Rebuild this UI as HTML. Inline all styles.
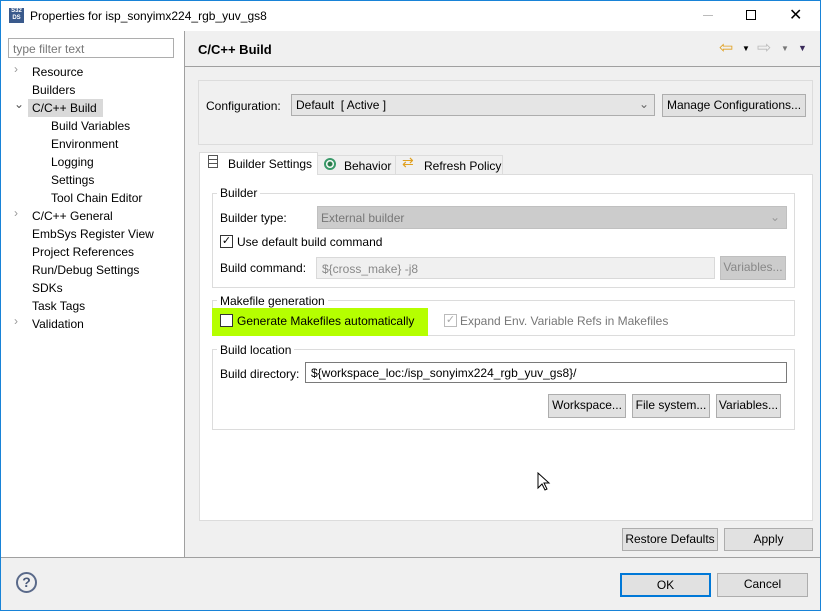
<!DOCTYPE html>
<html><head><meta charset="utf-8"><style>
*{box-sizing:border-box;margin:0;padding:0}
body{width:821px;height:611px;overflow:hidden;font-family:"Liberation Sans",sans-serif;font-size:12px;color:#000;background:#f0f0f0;position:relative}
.a{position:absolute;white-space:nowrap}
.btn{position:absolute;background:#e1e1e1;border:1px solid #adadad;text-align:center;line-height:20px}
.grp{position:absolute;border:1px solid #dcdcdc}
.gl{position:absolute;background:#fff;padding:0 3px;top:-8px;left:5px}
.cb{position:absolute;width:13px;height:13px;border:1px solid #333;background:#fff}
</style></head><body>
<div class="a" style="left:0;top:0;width:821px;height:611px;border:1px solid #1883d7;z-index:10;pointer-events:none"></div>
<div class="a" style="left:0;top:0;width:821px;height:31px;background:#fff"></div>
<div class="a" style="left:9px;top:8px;width:15px;height:15px;background:#3a5a8c;color:#fff;font-size:6px;line-height:7px;text-align:center;font-weight:bold">S32<br>DS</div>
<div class="a" style="left:30px;top:9px;font-size:12px">Properties for isp_sonyimx224_rgb_yuv_gs8</div>
<div class="a" style="left:703px;top:15px;width:10px;height:1px;background:#bbb"></div>
<div class="a" style="left:746px;top:10px;width:10px;height:10px;border:1px solid #000"></div>
<div class="a" style="left:789px;top:5px;font-size:16px">✕</div>
<!-- left -->
<div class="a" style="left:1px;top:31px;width:183px;height:526px;background:#fff"></div>
<div class="a" style="left:184px;top:31px;width:1px;height:526px;background:#a0a0a0"></div>
<div class="a" style="left:8px;top:38px;width:166px;height:20px;border:1px solid #adadad;background:#fff;color:#777;padding:3px 4px">type filter text</div>
<div class="a" style="left:28px;top:99px;width:75px;height:18px;background:#d9d9d9"></div>
<div class="a" style="left:14px;top:62px;color:#999">›</div>
<div class="a" style="left:14px;top:97px;color:#555">⌄</div>
<div class="a" style="left:14px;top:206px;color:#999">›</div>
<div class="a" style="left:14px;top:314px;color:#999">›</div>
<div class="a" style="left:32px;top:63px;line-height:18px">Resource<br>Builders<br>C/C++ Build</div>
<div class="a" style="left:51px;top:117px;line-height:18px">Build Variables<br>Environment<br>Logging<br>Settings<br>Tool Chain Editor</div>
<div class="a" style="left:32px;top:207px;line-height:18px">C/C++ General<br>EmbSys Register View<br>Project References<br>Run/Debug Settings<br>SDKs<br>Task Tags<br>Validation</div>
<!-- right header -->
<div class="a" style="left:198px;top:42px;font-size:13px;font-weight:bold">C/C++ Build</div>
<div class="a" style="left:185px;top:66px;width:635px;height:1px;background:#a0a0a0"></div>
<div class="a" style="left:719px;top:38px;color:#e0a020;font-size:17px">⇦</div>
<div class="a" style="left:742px;top:44px;font-size:8px">▼</div>
<div class="a" style="left:757px;top:38px;color:#bbb;font-size:17px">⇨</div>
<div class="a" style="left:781px;top:44px;font-size:8px;color:#777">▼</div>
<div class="a" style="left:798px;top:43px;font-size:9px;color:#3a2a5a">▼</div>
<div class="grp" style="left:198px;top:80px;width:615px;height:65px"></div>
<div class="a" style="left:206px;top:99px">Configuration:</div>
<div class="a" style="left:291px;top:94px;width:364px;height:22px;border:1px solid #adadad;background:#e5e5e5;padding:3px 4px">Default&nbsp; [ Active ]<span style="position:absolute;right:5px;top:2px;color:#666">⌄</span></div>
<div class="btn" style="left:662px;top:94px;width:144px;height:23px">Manage Configurations...</div>
<!-- tabs -->
<div class="a" style="left:199px;top:174px;width:614px;height:347px;background:#fff;border:1px solid #dcdcdc"></div>
<div class="a" style="left:317px;top:155px;width:79px;height:20px;border:1px solid #dcdcdc;background:#f0f0f0;padding:3px 0 0 26px">Behavior</div>
<div class="a" style="left:324px;top:158px;width:12px;height:12px;border-radius:50%;border:2px solid #3a9a6a;background:radial-gradient(#2a7a4a 2px,#fff 3px)"></div>
<div class="a" style="left:395px;top:155px;width:108px;height:20px;border:1px solid #dcdcdc;background:#f0f0f0;padding:3px 0 0 28px">Refresh Policy</div>
<div class="a" style="left:402px;top:154px;color:#e0a020;font-size:14px">⇄</div>
<div class="a" style="left:199px;top:152px;width:119px;height:23px;border:1px solid #dcdcdc;border-bottom:none;background:#fff;padding:4px 0 0 28px">Builder Settings</div>
<div class="a" style="left:208px;top:155px;width:10px;height:13px;border:1px solid #555;background:linear-gradient(#fff 3px,#555 3px,#555 4px,#fff 4px,#fff 7px,#555 7px,#555 8px,#fff 8px)"></div>
<!-- builder group -->
<div class="grp" style="left:212px;top:193px;width:583px;height:95px"><span class="gl" style="left:4px">Builder</span></div>
<div class="a" style="left:220px;top:211px">Builder type:</div>
<div class="a" style="left:317px;top:206px;width:470px;height:23px;background:#ccc;border:1px solid #c0c0c0;color:#777;padding:4px 3px">External builder<span style="position:absolute;right:6px;top:3px;color:#999">⌄</span></div>
<div class="cb" style="left:220px;top:235px;font-size:11px;line-height:11px;text-align:center">✓</div>
<div class="a" style="left:237px;top:235px">Use default build command</div>
<div class="a" style="left:220px;top:261px">Build command:</div>
<div class="a" style="left:316px;top:257px;width:399px;height:22px;background:#f0f0f0;border:1px solid #d9d9d9;color:#888;padding:4px 5px">${cross_make} -j8</div>
<div class="btn" style="left:720px;top:256px;width:66px;height:24px;background:#ccc;border-color:#bfbfbf;color:#888">Variables...</div>
<!-- makefile -->
<div class="grp" style="left:212px;top:300px;width:583px;height:36px"><span class="gl" style="left:4px;top:-7px">Makefile generation</span></div>
<div class="a" style="left:212px;top:308px;width:216px;height:28px;background:#b5ff00"></div>
<div class="cb" style="left:220px;top:314px"></div>
<div class="a" style="left:237px;top:314px">Generate Makefiles automatically</div>
<div class="cb" style="left:444px;top:314px;border-color:#bbb;color:#aaa;font-size:11px;line-height:11px;text-align:center">✓</div>
<div class="a" style="left:460px;top:314px;color:#777">Expand Env. Variable Refs in Makefiles</div>
<!-- location -->
<div class="grp" style="left:212px;top:349px;width:583px;height:81px"><span class="gl" style="left:4px;top:-7px">Build location</span></div>
<div class="a" style="left:220px;top:367px">Build directory:</div>
<div class="a" style="left:305px;top:362px;width:482px;height:21px;border:1px solid #7a7a7a;background:#fff;padding:3px 5px">${workspace_loc:/isp_sonyimx224_rgb_yuv_gs8}/</div>
<div class="btn" style="left:548px;top:394px;width:78px;height:24px">Workspace...</div>
<div class="btn" style="left:632px;top:394px;width:78px;height:24px">File system...</div>
<div class="btn" style="left:716px;top:394px;width:65px;height:24px">Variables...</div>
<svg class="a" style="left:537px;top:472px" width="14" height="20" viewBox="0 0 14 20"><path d="M1 1 L1 16 L5 12 L8 18 L10 17 L7 11 L12 11 Z" fill="#fff" stroke="#000" stroke-width="1"/></svg>
<div class="btn" style="left:622px;top:528px;width:96px;height:23px">Restore Defaults</div>
<div class="btn" style="left:724px;top:528px;width:89px;height:23px">Apply</div>
<!-- bottom -->
<div class="a" style="left:1px;top:557px;width:819px;height:1px;background:#a0a0a0"></div>
<div class="a" style="left:16px;top:572px;width:21px;height:21px;border-radius:50%;border:2px solid #5a6a8a;text-align:center;font-weight:bold;color:#4a5a7a;line-height:17px;font-size:14px">?</div>
<div class="btn" style="left:620px;top:573px;width:91px;height:24px;border:2px solid #0078d7">OK</div>
<div class="btn" style="left:717px;top:573px;width:91px;height:24px">Cancel</div>
</body></html>
